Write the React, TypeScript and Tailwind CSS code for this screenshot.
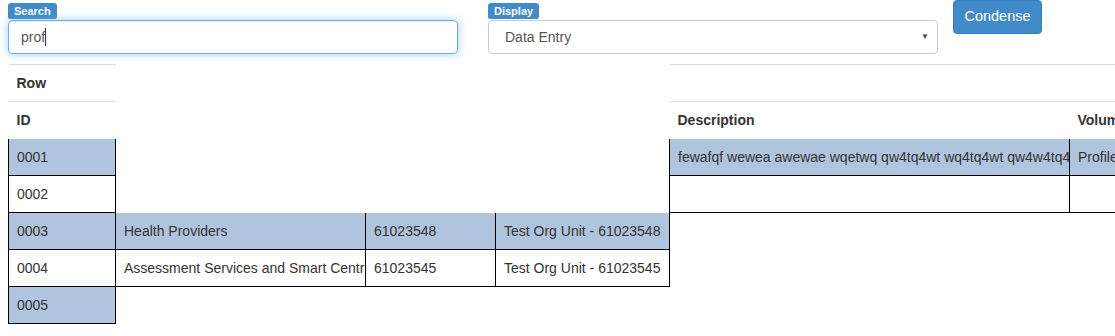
import React from 'react';

type Cell = string | undefined;

interface Row {
  id: string;
  shaded: boolean;
  cells: Cell[];
}

const rows: Row[] = [
  {
    id: '0001',
    shaded: true,
    cells: [undefined, undefined, undefined, 'fewafqf wewea awewae wqetwq qw4tq4wt wq4tq4wt qw4w4tq4 wqt4q', 'Profile'],
  },
  { id: '0002', shaded: false, cells: [undefined, undefined, undefined, '', ''] },
  {
    id: '0003',
    shaded: true,
    cells: ['Health Providers', '61023548', 'Test Org Unit - 61023548', undefined, undefined],
  },
  {
    id: '0004',
    shaded: false,
    cells: ['Assessment Services and Smart Centre', '61023545', 'Test Org Unit - 61023545', undefined, undefined],
  },
  { id: '0005', shaded: true, cells: [undefined, undefined, undefined, undefined, undefined] },
];

function Badge({ text }: { text: string }) {
  return (
    <span className="self-start rounded-t-[3px] rounded-b-[2px] bg-[#428bca] px-[6px] text-[11px] leading-[16px] font-bold text-white">
      {text}
    </span>
  );
}

function DataCell({ value, shaded }: { value: Cell; shaded: boolean }) {
  if (value === undefined) return <td className="p-0" />;
  return (
    <td
      className={`overflow-hidden whitespace-nowrap border-x border-b border-black px-2 py-2 leading-5 ${
        shaded ? 'bg-[#b0c4de]' : 'bg-white'
      }`}
    >
      {value}
    </td>
  );
}

export default function App() {
  return (
    <div
      className="h-[336px] w-[1115px] overflow-hidden bg-white text-[14px] text-[#333]"
      style={{ fontFamily: '"Liberation Sans", Arial, sans-serif' }}
    >
      <div className="flex items-start pl-2">
        <div className="mt-[3px] flex w-[450px] flex-col">
          <Badge text="Search" />
          <div className="mt-px flex h-[34px] items-center rounded-[4px] border border-[#66afe9] px-3 text-[#555] shadow-[inset_0_1px_1px_rgba(0,0,0,0.075),0_0_8px_rgba(102,175,233,0.6)]">
            <span>prof</span>
            <span className="h-[18px] w-px bg-[#333]" />
          </div>
        </div>

        <div className="ml-[30px] mt-[3px] flex w-[450px] flex-col">
          <Badge text="Display" />
          <div className="mt-px flex h-[34px] items-center justify-between rounded-[4px] border border-[#ccc] pl-4 pr-2 text-[#555]">
            <span>Data Entry</span>
            <span className="text-[8px] text-[#444]">▼</span>
          </div>
        </div>

        <button className="ml-[15px] h-[34px] w-[89px] rounded-[4px] border border-[#357ebd] bg-[#428bca] text-[14.5px] text-white">
          Condense
        </button>
      </div>

      <div className="mt-[10px] pl-2">
        <table className="table-fixed border-collapse" style={{ width: 1361 }}>
          <colgroup>
            <col className="w-[107px]" />
            <col className="w-[250px]" />
            <col className="w-[130px]" />
            <col className="w-[174px]" />
            <col className="w-[400px]" />
            <col className="w-[300px]" />
          </colgroup>
          <thead>
            <tr>
              <th className="border-t border-[#ddd] px-2 py-2 text-left leading-5">Row</th>
              <th />
              <th />
              <th />
              <th className="border-t border-[#ddd] px-2 py-2 text-left leading-5">&nbsp;</th>
              <th className="border-t border-[#ddd] px-2 py-2 text-left leading-5">&nbsp;</th>
            </tr>
            <tr>
              <th className="border-t border-[#ddd] px-2 pt-2 pb-[9px] text-left leading-5">ID</th>
              <th />
              <th />
              <th />
              <th className="border-t border-[#ddd] px-2 pt-2 pb-[9px] text-left leading-5">Description</th>
              <th className="overflow-hidden whitespace-nowrap border-t border-[#ddd] px-2 pt-2 pb-[9px] text-left leading-5">
                Volume
              </th>
            </tr>
          </thead>
          <tbody>
            {rows.map((row) => (
              <tr key={row.id}>
                <DataCell value={row.id} shaded={row.shaded} />
                {row.cells.map((c, i) => (
                  <DataCell key={i} value={c} shaded={row.shaded} />
                ))}
              </tr>
            ))}
          </tbody>
        </table>
      </div>
    </div>
  );
}
